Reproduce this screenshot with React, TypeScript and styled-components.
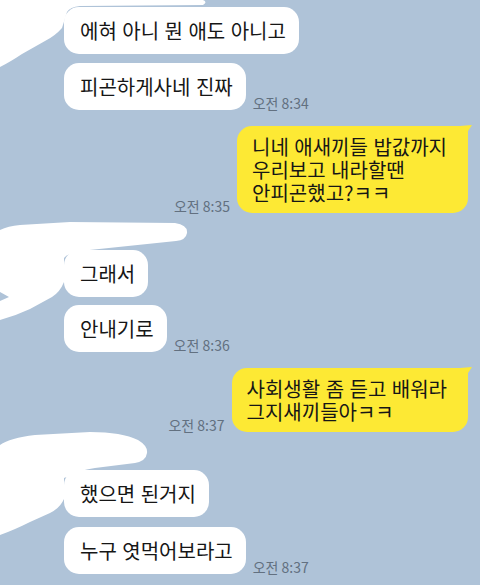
import React from 'react';
import styled, { createGlobalStyle } from 'styled-components';

const Global = createGlobalStyle`
  html, body { margin: 0; padding: 0; background: #afc3d8; }
  body { width: 480px; height: 585px; overflow: hidden; font-family: "Noto Sans CJK KR", "Noto Sans", sans-serif; }
`;

const Screen = styled.div`
  position: relative;
  width: 480px;
  height: 585px;
  box-sizing: border-box;
  background: #afc3d8;
  overflow: hidden;
  display: flex;
  flex-direction: column;
  padding: 7px 12px 0 64px;
`;

const Row = styled.div<{ $mine?: boolean; $gap: number }>`
  display: flex;
  flex-direction: ${(p) => (p.$mine ? 'row-reverse' : 'row')};
  align-items: flex-end;
  gap: 7px;
  margin-top: ${(p) => p.$gap}px;
`;

const Bubble = styled.div<{ $mine?: boolean }>`
  position: relative;
  background: ${(p) => (p.$mine ? '#fde934' : '#ffffff')};
  color: #161616;
  font-size: 20px;
  line-height: 23px;
  word-spacing: 1px;
  white-space: pre-line;
  border-radius: 15px;
  padding: ${(p) => (p.$mine ? '9px 21px 9px 15px' : '12px 13px 12px 16px')};
  ${(p) =>
    p.$mine &&
    `
    border-top-right-radius: 4px;
    &::after {
      content: '';
      position: absolute;
      top: -1px;
      right: -4px;
      width: 12px;
      height: 12px;
      background: #fde934;
      clip-path: polygon(0 1px, 100% 0, 4px 100%);
    }
  `}
`;

const Time = styled.span`
  font-size: 14px;
  line-height: 14px;
  color: #627080;
  white-space: nowrap;
  margin-bottom: 0;
`;

const Overlay = styled.svg`
  position: absolute;
  inset: 0;
  pointer-events: none;
`;

type Msg = { text: string; mine?: boolean; time?: string; gap: number };

const messages: Msg[] = [
  { text: '에혀 아니 뭔 애도 아니고', gap: 0 },
  { text: '피곤하게사네 진짜', time: '오전 8:34', gap: 9 },
  { text: '니네 애새끼들 밥값까지\n우리보고 내라할땐\n안피곤했고?ㅋㅋ', mine: true, time: '오전 8:35', gap: 16 },
  { text: '그래서', gap: 37 },
  { text: '안내기로', time: '오전 8:36', gap: 8 },
  { text: '사회생활 좀 듣고 배워라\n그지새끼들아ㅋㅋ', mine: true, time: '오전 8:37', gap: 16 },
  { text: '했으면 된거지', gap: 38 },
  { text: '누구 엿먹어보라고', time: '오전 8:37', gap: 10 },
];

export default function App() {
  return (
    <>
      <Global />
      <Screen>
        {messages.map((m, i) => (
          <Row key={i} $mine={m.mine} $gap={m.gap}>
            <Bubble $mine={m.mine}>{m.text}</Bubble>
            {m.time && <Time>{m.time}</Time>}
          </Row>
        ))}
        <Overlay width="480" height="585" viewBox="0 0 480 585">
          <path
            fill="#ffffff"
            d="M0 0 H203 Q208 2 203 5 L80 6 Q70 7 67 12 L62 28 Q55 36 45 41 L22 54 Q10 62 0 67 Z"
          />
          <path
            fill="#ffffff"
            d="M0 230 Q8 226 20 225 L70 222 L175 223 Q188 225 187 233 Q186 240 176 241 L80 251 Q68 253 64 258 L64 282 Q60 292 52 297 L30 309 Q15 316 0 320 L0 301 L9 297 L0 292 Z"
          />
          <path
            fill="#ffffff"
            d="M0 445 Q10 438 35 435 L90 432 Q122 432 138 440 Q148 446 147 453 Q146 461 135 463 L95 468 Q80 470 75 474 L64 478 L64 499 Q60 508 50 513 L30 522 Q14 530 0 535 Z"
          />
        </Overlay>
      </Screen>
    </>
  );
}
